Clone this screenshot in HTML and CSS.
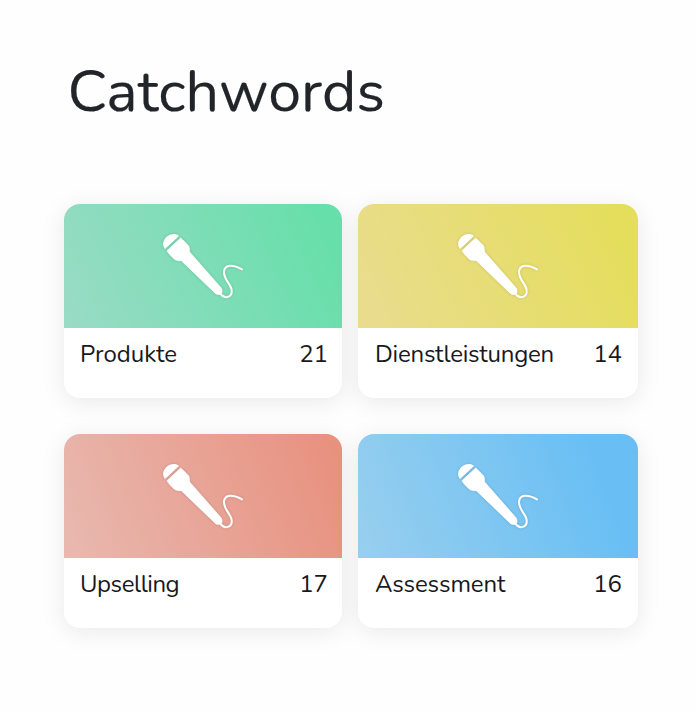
FILE: index.html
```html
<!DOCTYPE html>
<html lang="de">
<head>
<meta charset="utf-8">
<title>Catchwords</title>
<link rel="stylesheet" href="styles.css">
</head>
<body>
<svg class="defs" aria-hidden="true">
  <symbol id="mic" viewBox="33 33 252 210">
    <path fill="#fff" d="M45 87C36 76 38 62 49 51C60 41 77 39 87 48Z"/>
    <path fill="#fff" stroke="#fff" stroke-width="2" stroke-linejoin="round" d="M51 92L92 54C96 57 113 74 116 78C119 83 118 91 119 96L213 203C217 208 217 216 215 219C211 224 202 225 197 221L94 122C87 122 79 123 74 118C69 114 52 97 51 92Z"/>
    <path fill="none" stroke="#fff" stroke-width="6" stroke-linecap="round" d="M211 221C224 239 247 232 245 211C244 192 221 180 222 155C224 132 249 133 276 148"/>
  </symbol>
</svg>
<main class="page">
  <h1 class="heading">Catchwords</h1>
  <section class="grid">
    <article class="card">
      <div class="cover green"><svg class="icon"><use href="#mic"/></svg></div>
      <div class="info"><span class="name">Produkte</span><span class="count">21</span></div>
    </article>
    <article class="card card-wide">
      <div class="cover yellow"><svg class="icon"><use href="#mic"/></svg></div>
      <div class="info"><span class="name name-long">Dienstleistungen</span><span class="count">14</span></div>
    </article>
    <article class="card">
      <div class="cover red"><svg class="icon"><use href="#mic"/></svg></div>
      <div class="info"><span class="name name-tight">Upselling</span><span class="count">17</span></div>
    </article>
    <article class="card card-wide">
      <div class="cover blue"><svg class="icon"><use href="#mic"/></svg></div>
      <div class="info"><span class="name name-short">Assessment</span><span class="count">16</span></div>
    </article>
  </section>
</main>
</body>
</html>
```
FILE: styles.css
```css
* { box-sizing: border-box; }
body {
  margin: 0;
  background: #fefefe;
  color: #212529;
  font-family: Nunito, Lato, sans-serif;
}
.defs { display: none; }
.page {
  min-height: 712px;
  padding: 56px 58px 0 64px;
}
.heading {
  margin: 0 0 76px;
  padding-left: 3.5px;
  font-size: 59px;
  font-weight: 400;
  line-height: 72px;
  letter-spacing: 0.1px;
  -webkit-text-stroke: 0.2px #212529;
}
.grid {
  display: grid;
  grid-template-columns: 278px 280px;
  gap: 36px 16px;
}
.card {
  height: 194px;
  border-radius: 16px;
  background: #fff;
  box-shadow: 0 4px 24px rgba(0, 0, 0, 0.085);
}
.cover {
  display: flex;
  align-items: center;
  justify-content: center;
  height: 124px;
  border-radius: 16px 16px 0 0;
}
.green { background: linear-gradient(66deg, #9adbc6, #67dfaa 92%); }
.yellow { background: linear-gradient(66deg, #eadc90, #e4de5c 92%); }
.red { background: linear-gradient(70deg, #e8b9b0, #e8917f 96%); }
.blue { background: linear-gradient(70deg, #98cfee, #69bff4 84%); }
.icon {
  width: 84px;
  height: 70px;
  filter: drop-shadow(0 0 1.5px rgba(0, 0, 0, 0.14));
}
.info {
  display: flex;
  justify-content: space-between;
  padding: 9px 14px 0 16px;
  color: #17191d;
  font-size: 24px;
  line-height: 34px;
}
.card-wide .info { padding: 9px 16px 0 17px; }
.name-long { letter-spacing: -0.22px; }
.name-tight { letter-spacing: -0.45px; }
.name-short { letter-spacing: -0.15px; }
```
